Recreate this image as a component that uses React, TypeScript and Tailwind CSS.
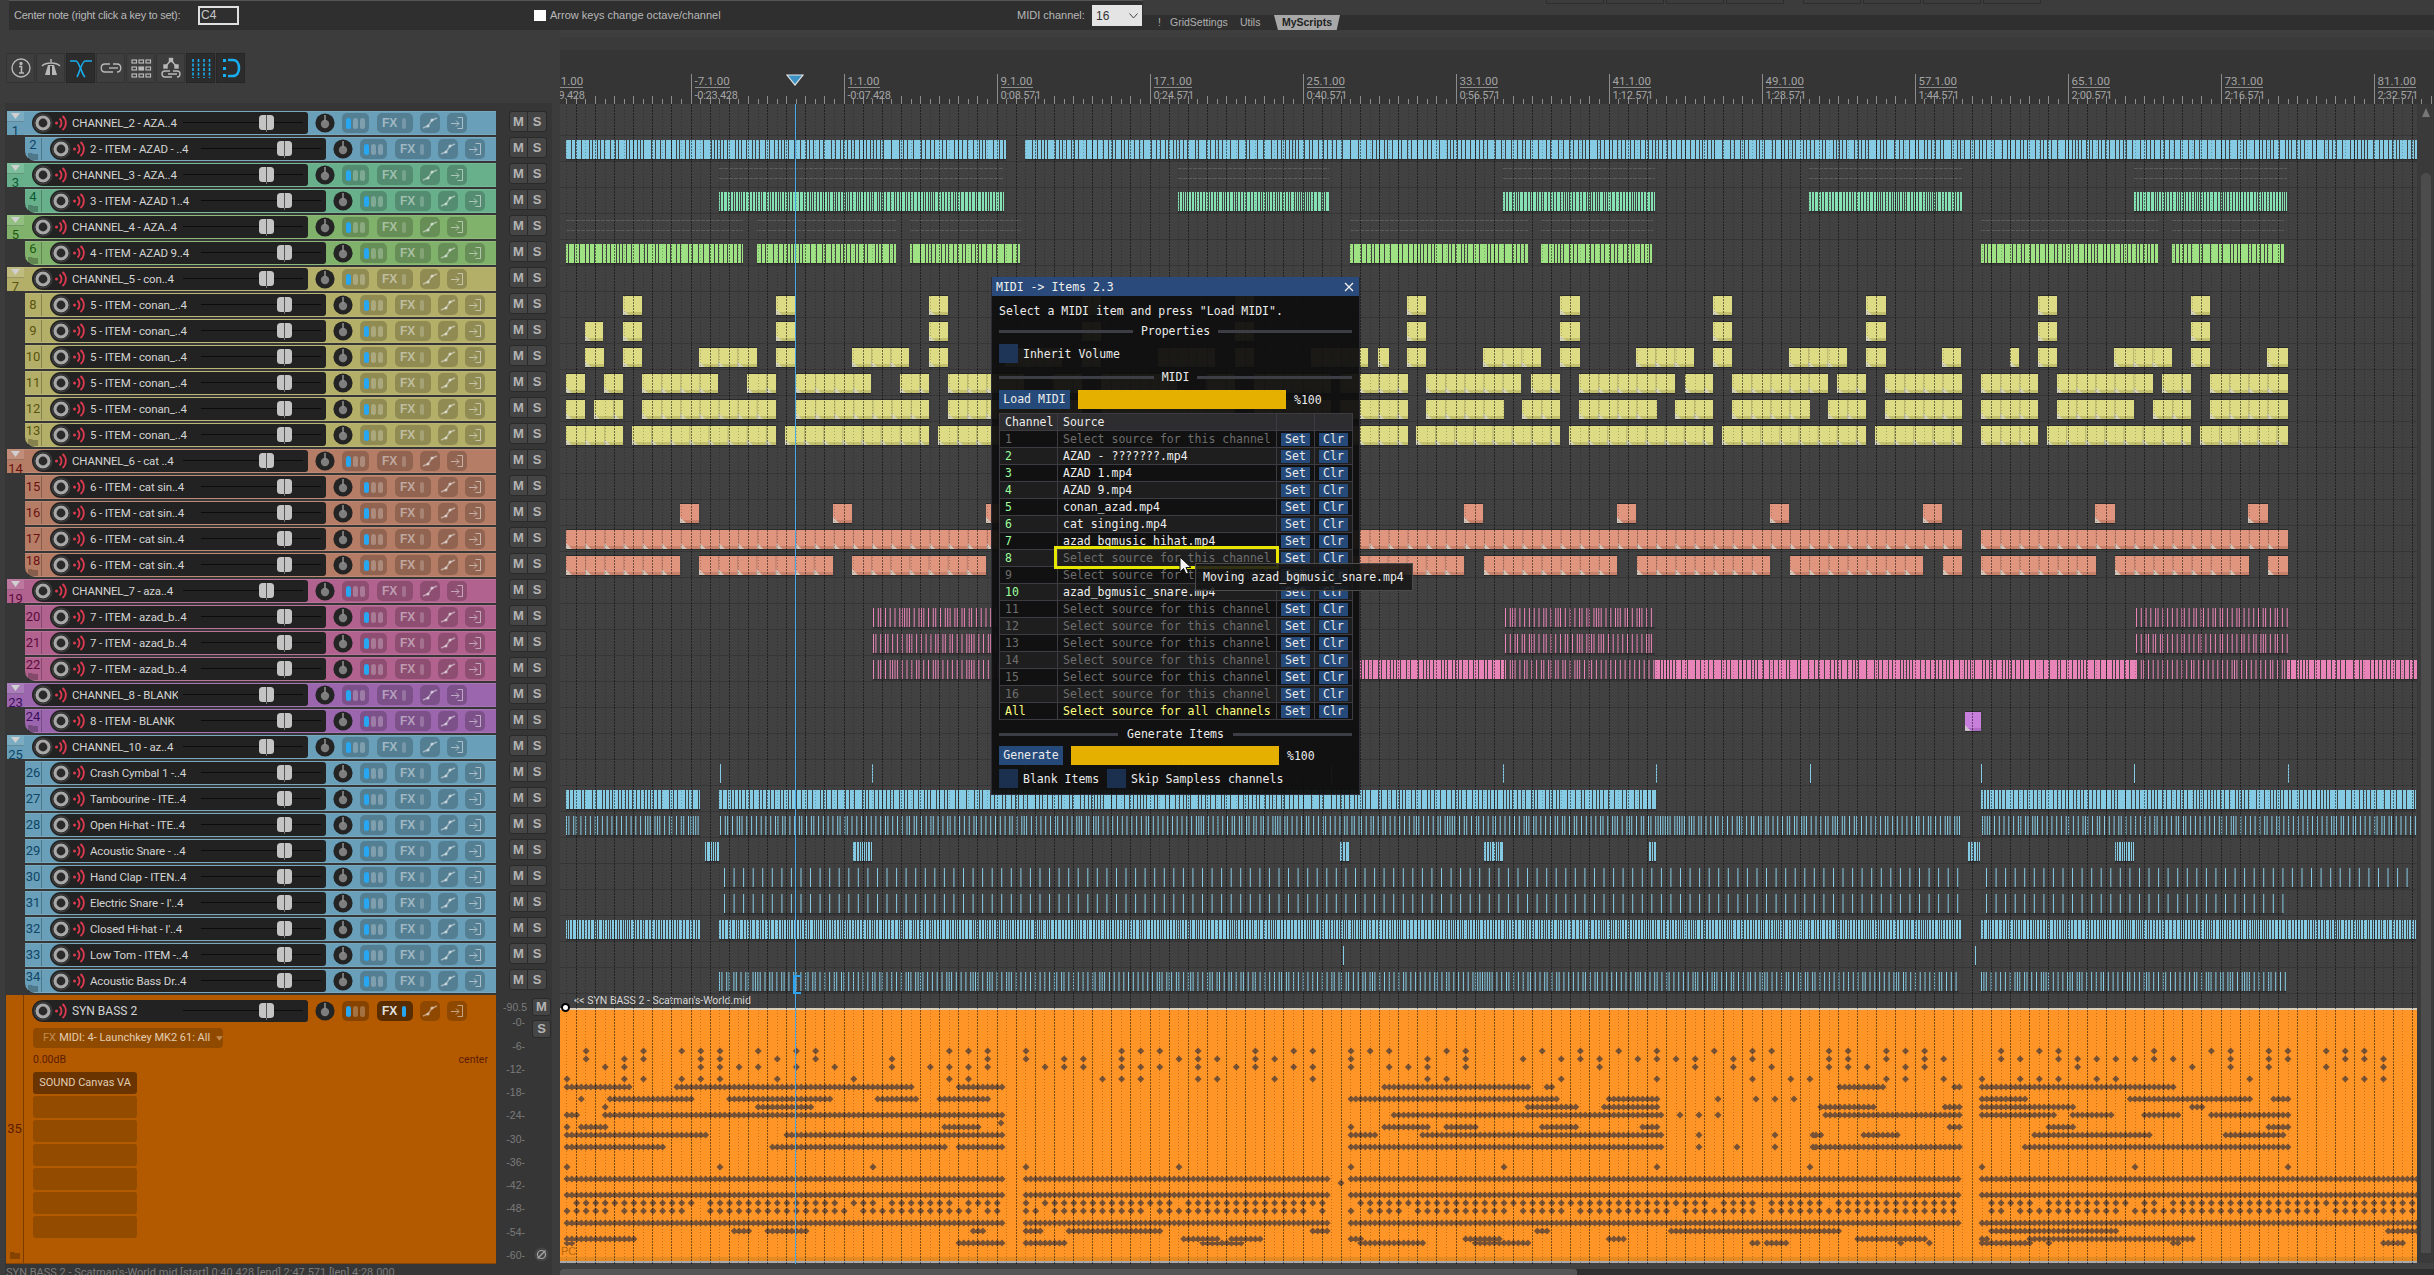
import React from "react";

type Range = [number, number];

function rng(seed: number) {
  let a = seed >>> 0;
  return () => {
    a = (a + 0x6d2b79f5) >>> 0;
    let t = a;
    t = Math.imul(t ^ (t >>> 15), t | 1);
    t ^= t + Math.imul(t ^ (t >>> 7), t | 61);
    return ((t ^ (t >>> 14)) >>> 0) / 4294967296;
  };
}

const OX = 560;
const AW = 1857;
const P = 19.125;

const GROUPS = {
  blue: { bg: "bg-[#699fb8]", num: "text-[#0f4566]", fold: "bg-[#7cacc2]", clip: "#86cbe4", low: "#6fb0ca" },
  teal: { bg: "bg-[#68b08c]", num: "text-[#0c5a34]", fold: "bg-[#7cbd9c]", clip: "#84e2b4", low: "#6cc29a" },
  green: { bg: "bg-[#80b26c]", num: "text-[#1d5a0c]", fold: "bg-[#93bf82]", clip: "#9ee284", low: "#84c26c" },
  yellow: { bg: "bg-[#b3ae68]", num: "text-[#5a5410]", fold: "bg-[#c0bb7e]", clip: "#dddb84", low: "#c2c06e" },
  salmon: { bg: "bg-[#b57d66]", num: "text-[#6a1212]", fold: "bg-[#c08e7a]", clip: "#e0957f", low: "#c8826c" },
  pink: { bg: "bg-[#b1628f]", num: "text-[#5c0c3c]", fold: "bg-[#bd78a0]", clip: "#e984b8", low: "#cc6c9e" },
  purple: { bg: "bg-[#9b66ad]", num: "text-[#3c0f5c]", fold: "bg-[#a97dba]", clip: "#c87fdc", low: "#b06cc4" },
};
type GroupKey = keyof typeof GROUPS;

type Row = { n: number; g: GroupKey; name: string; parent?: boolean; last?: boolean };
const ROWS: Row[] = [
  { n: 1, g: "blue", name: "CHANNEL_2 - AZA..4", parent: true },
  { n: 2, g: "blue", name: "2 - ITEM - AZAD - ..4", last: true },
  { n: 3, g: "teal", name: "CHANNEL_3 - AZA..4", parent: true },
  { n: 4, g: "teal", name: "3 - ITEM - AZAD 1..4", last: true },
  { n: 5, g: "green", name: "CHANNEL_4 - AZA..4", parent: true },
  { n: 6, g: "green", name: "4 - ITEM - AZAD 9..4", last: true },
  { n: 7, g: "yellow", name: "CHANNEL_5 - con..4", parent: true },
  { n: 8, g: "yellow", name: "5 - ITEM - conan_..4" },
  { n: 9, g: "yellow", name: "5 - ITEM - conan_..4" },
  { n: 10, g: "yellow", name: "5 - ITEM - conan_..4" },
  { n: 11, g: "yellow", name: "5 - ITEM - conan_..4" },
  { n: 12, g: "yellow", name: "5 - ITEM - conan_..4" },
  { n: 13, g: "yellow", name: "5 - ITEM - conan_..4", last: true },
  { n: 14, g: "salmon", name: "CHANNEL_6 - cat ..4", parent: true },
  { n: 15, g: "salmon", name: "6 - ITEM - cat sin..4" },
  { n: 16, g: "salmon", name: "6 - ITEM - cat sin..4" },
  { n: 17, g: "salmon", name: "6 - ITEM - cat sin..4" },
  { n: 18, g: "salmon", name: "6 - ITEM - cat sin..4", last: true },
  { n: 19, g: "pink", name: "CHANNEL_7 - aza..4", parent: true },
  { n: 20, g: "pink", name: "7 - ITEM - azad_b..4" },
  { n: 21, g: "pink", name: "7 - ITEM - azad_b..4" },
  { n: 22, g: "pink", name: "7 - ITEM - azad_b..4", last: true },
  { n: 23, g: "purple", name: "CHANNEL_8 - BLANK", parent: true },
  { n: 24, g: "purple", name: "8 - ITEM - BLANK", last: true },
  { n: 25, g: "blue", name: "CHANNEL_10 - az..4", parent: true },
  { n: 26, g: "blue", name: "Crash Cymbal 1 -..4" },
  { n: 27, g: "blue", name: "Tambourine - ITE..4" },
  { n: 28, g: "blue", name: "Open Hi-hat - ITE..4" },
  { n: 29, g: "blue", name: "Acoustic Snare - ..4" },
  { n: 30, g: "blue", name: "Hand Clap - ITEN..4" },
  { n: 31, g: "blue", name: "Electric Snare - I'..4" },
  { n: 32, g: "blue", name: "Closed Hi-hat - I'..4" },
  { n: 33, g: "blue", name: "Low Tom - ITEM -..4" },
  { n: 34, g: "blue", name: "Acoustic Bass Dr..4", last: true },
];

const Y8: Range[] = [[623, 642], [776, 795], [929, 948], [1082, 1101], [1235, 1254], [1407, 1426], [1560, 1580], [1713, 1732], [1866, 1886], [2038, 2057], [2191, 2210]];
const Y9: Range[] = [[585, 603], ...Y8];
const Y10: Range[] = [[585, 604], [623, 642], [699, 757], [776, 795], [852, 909], [929, 948], [1005, 1062], [1082, 1101], [1158, 1215], [1235, 1254], [1311, 1368], [1378, 1389], [1407, 1426], [1483, 1541], [1560, 1580], [1636, 1694], [1713, 1732], [1789, 1847], [1866, 1886], [1942, 1961], [2010, 2019], [2038, 2057], [2114, 2172], [2191, 2210], [2267, 2288]];
const Y11: Range[] = [[566, 585], [604, 623], [642, 718], [747, 776], [796, 871], [900, 929], [948, 1024], [1053, 1082], [1101, 1177], [1206, 1235], [1254, 1331], [1340, 1408], [1426, 1521], [1531, 1560], [1579, 1675], [1685, 1713], [1732, 1828], [1837, 1866], [1885, 1962], [1981, 2038], [2057, 2153], [2162, 2191], [2210, 2288]];
const Y12: Range[] = [[566, 585], [594, 623], [642, 776], [796, 929], [948, 1082], [1101, 1235], [1254, 1331], [1340, 1408], [1426, 1504], [1522, 1560], [1579, 1657], [1675, 1713], [1732, 1810], [1828, 1866], [1885, 1962], [1981, 2038], [2057, 2134], [2153, 2191], [2210, 2288]];
const Y13: Range[] = [[566, 623], [632, 776], [785, 929], [938, 1082], [1091, 1235], [1244, 1331], [1340, 1408], [1416, 1560], [1569, 1713], [1722, 1866], [1875, 1962], [1981, 2038], [2047, 2191], [2200, 2288]];
const S16: Range[] = [[680, 699], [833, 852], [986, 1005], [1139, 1158], [1292, 1311], [1464, 1483], [1617, 1636], [1770, 1789], [1923, 1942], [2095, 2115], [2248, 2268]];
const S17: Range[] = [[566, 1962], [1981, 2288]];
const S18: Range[] = [[566, 680], [699, 833], [852, 986], [1005, 1139], [1158, 1292], [1311, 1464], [1484, 1617], [1637, 1770], [1790, 1923], [1943, 1962], [1981, 2096], [2115, 2249], [2268, 2288]];

const CLIPS: Record<number, { g: GroupKey; r: Range[] }> = {
  8: { g: "yellow", r: Y8 }, 9: { g: "yellow", r: Y9 }, 10: { g: "yellow", r: Y10 }, 11: { g: "yellow", r: Y11 }, 12: { g: "yellow", r: Y12 }, 13: { g: "yellow", r: Y13 },
  16: { g: "salmon", r: S16 }, 17: { g: "salmon", r: S17 }, 18: { g: "salmon", r: S18 },
  24: { g: "purple", r: [[1965, 1981]] },
};

type Mode = "solid" | "dense" | "stick" | "even";
const BARS: Record<number, { g: GroupKey; r: Range[]; m: Mode }[]> = {
  2: [{ g: "blue", r: [[566, 1006], [1025, 2417]], m: "solid" }],
  4: [{ g: "teal", r: [[719, 1004], [1178, 1329], [1503, 1655], [1809, 1962], [2134, 2287]], m: "dense" }],
  6: [{ g: "green", r: [[566, 743], [757, 896], [910, 1021], [1350, 1528], [1541, 1653], [1981, 2158], [2172, 2284]], m: "solid" }],
  20: [{ g: "pink", r: [[873, 1000], [1505, 1655], [2136, 2287]], m: "stick" }],
  21: [{ g: "pink", r: [[873, 1000], [1505, 1655], [2136, 2287]], m: "stick" }],
  22: [
    { g: "pink", r: [[873, 1000], [1505, 1655], [2136, 2287]], m: "stick" },
    { g: "pink", r: [[1000, 1505], [1655, 2136], [2287, 2417]], m: "solid" },
  ],
  26: [{ g: "blue", r: [[720, 721], [872, 873], [1025, 1026], [1178, 1179], [1331, 1332], [1503, 1504], [1656, 1657], [1810, 1811], [1981, 1982], [2134, 2135], [2288, 2289]], m: "solid" }],
  27: [{ g: "blue", r: [[566, 700], [719, 1656], [1981, 2416]], m: "solid" }],
  28: [{ g: "blue", r: [[566, 700], [720, 1961], [1982, 2416]], m: "stick" }],
  29: [{ g: "blue", r: [[705, 720], [853, 872], [1340, 1350], [1484, 1503], [1649, 1656], [1968, 1980], [2115, 2134]], m: "dense" }],
  30: [{ g: "blue", r: [[724, 1959], [1986, 2409]], m: "even" }],
  31: [{ g: "blue", r: [[724, 1959], [1986, 2283]], m: "even" }],
  32: [{ g: "blue", r: [[566, 700], [719, 1962], [1981, 2416]], m: "dense" }],
  33: [{ g: "blue", r: [[1343, 1344], [1975, 1976]], m: "solid" }],
  34: [{ g: "blue", r: [[719, 1959], [1981, 2286]], m: "stick" }],
};

function barsPath(r: Range[], m: Mode, seed: number, h: number) {
  const rand = rng(seed);
  let d = "";
  const push = (x: number, w: number) => {
    d += `M${(x - OX).toFixed(1)} 0h${w}v${h}h${-w}z`;
  };
  for (const [a, b] of r) {
    if (b - a < 2) {
      push(a, 1);
      continue;
    }
    let x = a;
    while (x < b) {
      if (m === "solid") {
        const w = [2, 2, 3, 3, 4, 5, 7][Math.floor(rand() * 7)];
        const ww = Math.min(w, b - x);
        push(x, ww);
        x += ww + 1;
      } else if (m === "dense") {
        const w = [1, 1, 2, 2, 3][Math.floor(rand() * 5)];
        const ww = Math.min(w, b - x);
        push(x, ww);
        x += ww + 1;
      } else if (m === "stick") {
        push(x, 1);
        x += rand() < 0.3 ? 2.4 : 4.78;
      } else {
        push(x, 1);
        x += 9.56;
      }
    }
  }
  return d;
}

function Lane({ n }: { n: number }) {
  const clip = CLIPS[n];
  const bars = BARS[n];
  const thin = n === 3 ? BARS[4][0].r : n === 5 ? BARS[6][0].r : null;
  return (
    <div className="h-[26px] w-full">
      <svg width={AW} height={26} className="block">
        <line x1={0} x2={AW} y1={24.5} y2={24.5} stroke="#363636" />
        {thin &&
          thin.map(([a, b], i) => (
            <g key={i} stroke="#5c5c5c" strokeDasharray="4 1">
              <line x1={a - OX} x2={b - OX} y1={5.5} y2={5.5} />
              <line x1={a - OX} x2={b - OX} y1={15.5} y2={15.5} />
            </g>
          ))}
        {clip &&
          clip.r.map(([a, b], i) => {
            const x = a - OX;
            const w = b - a;
            const g = GROUPS[clip.g];
            const tris: number[] = [];
            for (let t = x; t < x + w - 4; t += P) tris.push(t);
            return (
              <g key={i}>
                <rect x={x} y={2} width={w} height={21} fill="#2b2b2b" />
                <rect x={x} y={3} width={w} height={16} fill={g.clip} />
                <rect x={x} y={19} width={w} height={3} fill={g.low} />
                {tris.map((t, k) => (
                  <g key={k}>
                    <path d={`M${t} 16L${t + 6} 22H${t}Z`} fill="#d8d8d0" fillOpacity={0.75} />
                    {k > 0 && <line x1={t + 0.5} x2={t + 0.5} y1={3} y2={22} stroke="#000" strokeOpacity={0.18} />}
                  </g>
                ))}
              </g>
            );
          })}
        {bars &&
          bars.map((b, i) => {
            const g = GROUPS[b.g];
            return (
              <g key={i}>
                {b.r.map(([a, c], k) => (
                  <rect key={k} x={a - OX} y={22} width={c - a} height={1.5} fill="#2e2e2e" />
                ))}
                <g transform="translate(0,3)">
                  <path d={barsPath(b.r, b.m, n * 97 + i, 19)} fill={g.clip} />
                </g>
              </g>
            );
          })}
      </svg>
    </div>
  );
}

function diamondsPath() {
  const rand = rng(4242);
  const ranges: Range[] = [[566, 1006], [1025, 1331], [1350, 1960], [1981, 2417]];
  const dense: Range[] = [[566, 1006], [1350, 1660], [1815, 1960], [1981, 2290]];
  let d = "";
  const add = (x: number, y: number) => {
    d += `M${(x - OX).toFixed(1)} ${y - 3.5}l3.5 3.5l-3.5 3.5l-3.5-3.5z`;
  };
  const run = (y: number, rs: Range[], step: number, p: number) => {
    for (const [a, b] of rs) {
      for (let x = a + 1; x < b; x += step) if (rand() < p) add(x, y - 1008);
    }
  };
  const cluster = (y: number, rs: Range[], on: number) => {
    for (const [a, b] of rs) {
      let s = rand() < 0.5;
      for (let x = a + 1; x < b; x += 4.78) {
        if (rand() < 0.12) s = rand() < on;
        if (s) add(x, y - 1008);
      }
    }
  };
  [1177, 1193, 1221].forEach((y) => run(y, ranges, 4.78, 1));
  [1201, 1209].forEach((y) => run(y, ranges, 9.56, 0.9));
  [1049, 1057, 1065, 1077].forEach((y) => run(y, ranges, 19.12, 0.45));
  run(1165, ranges, 153, 1);
  cluster(1085, dense, 0.6);
  cluster(1097, dense, 0.5);
  cluster(1105, dense, 0.5);
  cluster(1113, dense, 0.85);
  cluster(1125, dense, 0.35);
  cluster(1133, dense, 0.6);
  cluster(1145, dense, 0.9);
  run(1121, [[1000, 1010]], 19, 1);
  run(1145, [[1660, 1815]], 38, 0.7);
  run(1133, [[1660, 1815]], 38, 0.7);
  run(1113, [[1660, 1815]], 19, 0.4);
  run(1097, [[1660, 1815]], 19, 0.4);
  cluster(1229, ranges, 0.4);
  cluster(1237, ranges, 0.2);
  cluster(1241, ranges, 0.25);
  run(1181, [[1340, 1345]], 5, 1);
  return d;
}
const DIAMONDS = diamondsPath();

const BAR_LABELS: [string, string][] = [
  ["-15.1.00", "-0:39.428"], ["-7.1.00", "-0:23.428"], ["1.1.00", "-0:07.428"], ["9.1.00", "0:08.571"], ["17.1.00", "0:24.571"], ["25.1.00", "0:40.571"], ["33.1.00", "0:56.571"], ["41.1.00", "1:12.571"], ["49.1.00", "1:28.571"], ["57.1.00", "1:44.571"], ["65.1.00", "2:00.571"], ["73.1.00", "2:16.571"], ["81.1.00", "2:32.571"],
];

function GridOverlay() {
  const lines: React.ReactNode[] = [];
  let k = 0;
  for (let x = 843.6 - 153 * 2; x < 2417; x += 9.5625) {
    const px = Math.round(x - OX) + 0.5;
    if (px > 0) {
      const major = k % 2 === 0;
      lines.push(<line key={k} x1={px} x2={px} y1={0} y2={1160} stroke="#000" strokeOpacity={major ? 0.5 : 0.24} strokeDasharray={major ? "2 1" : "1 2"} />);
    }
    k++;
  }
  return (
    <svg width={AW} height={1160} className="absolute left-0 top-0 pointer-events-none">
      {lines}
    </svg>
  );
}

function RecSpk() {
  return (
    <svg width={40} height={22} viewBox="0 0 40 22" className="shrink-0">
      <circle cx={11} cy={11} r={6} fill="#2a2a2a" stroke="#a8a8a8" strokeWidth={3.2} />
      <circle cx={11} cy={11} r={8.8} fill="none" stroke="#3c3c3c" strokeWidth={1.5} />
      <circle cx={24.5} cy={11} r={1.5} fill="#dc3a50" />
      <path d="M27.5 6.5 A6 6 0 0 1 27.5 15.5" fill="none" stroke="#dc3a50" strokeWidth={1.8} />
      <path d="M30.5 4 A9 9 0 0 1 30.5 18" fill="none" stroke="#dc3a50" strokeWidth={1.8} />
    </svg>
  );
}

function Fader() {
  return (
    <svg width={120} height={22} viewBox="0 0 120 22" className="shrink-0 ml-[5px]">
      <line x1={0} x2={120} y1={10.5} y2={10.5} stroke="#0c0c0c" />
      <rect x={76} y={3} width={15} height={15} rx={3.5} fill="#c4c4c4" />
      <rect x={83} y={3} width={1} height={15} fill="#555" />
      <rect x={83} y={18} width={1} height={2} fill="#777" />
    </svg>
  );
}

function Knob() {
  return (
    <svg width={20} height={22} viewBox="0 0 20 22" className="shrink-0">
      <circle cx={10} cy={11} r={9.6} fill="#242424" />
      <circle cx={10} cy={12} r={4.2} fill="#7e7e7e" />
      <rect x={9.2} y={3} width={1.6} height={7} fill="#8a8a8a" />
    </svg>
  );
}

function Routing({ strong }: { strong?: boolean }) {
  return (
    <div className={`ml-[7px] w-[27px] h-[20px] rounded-[5px] flex items-center justify-center gap-[2px] ${strong ? "bg-black/25" : "bg-black/20"}`}>
      <div className="w-[5px] h-[11px] rounded-full bg-[#27a6f2]" />
      <div className="w-[5px] h-[11px] rounded-full bg-white/25" />
      <div className="w-[5px] h-[11px] rounded-full bg-white/25" />
    </div>
  );
}

function FxBtn({ on }: { on?: boolean }) {
  return (
    <div className={`ml-[8px] w-[36px] h-[20px] rounded-[5px] flex items-center pl-[5px] gap-[5px] ${on ? "bg-black/50" : "bg-black/20"}`}>
      <span className={`text-[12px] font-bold leading-none ${on ? "text-[#e0e0e0]" : "text-white/45"}`}>FX</span>
      <div className={`w-[4px] h-[11px] rounded-full ${on ? "bg-[#27a6f2]" : "bg-white/20"}`} />
    </div>
  );
}

function EnvBtn() {
  return (
    <div className="ml-[7px] w-[20px] h-[20px] rounded-[5px] bg-black/20 flex items-center justify-center">
      <svg width={16} height={14} viewBox="0 0 16 14">
        <path d="M1 12 L6 10 L10 4 L15 2" fill="none" stroke="#ffffff" strokeOpacity={0.45} strokeWidth={1.5} />
        <circle cx={6} cy={10} r={1.6} fill="#ffffff" fillOpacity={0.5} />
        <circle cx={10} cy={4} r={1.6} fill="#ffffff" fillOpacity={0.5} />
      </svg>
    </div>
  );
}

function IoBtn() {
  return (
    <div className="ml-[7px] w-[20px] h-[20px] rounded-[5px] bg-black/20 flex items-center justify-center">
      <svg width={14} height={14} viewBox="0 0 14 14" fill="none" stroke="#ffffff" strokeOpacity={0.5} strokeWidth={1}>
        <path d="M1 7.5H8.5M6 4.5L9 7.5L6 10.5" />
        <path d="M7.5 1.5H12.5V12.5H7.5" />
      </svg>
    </div>
  );
}

function Pill({ name }: { name: string }) {
  return (
    <div className="w-[276px] h-[22px] rounded-l-[11px] rounded-r-[3px] bg-[#222222] flex items-center shrink-0">
      <RecSpk />
      <div className="w-[106px] overflow-hidden whitespace-nowrap text-[11.5px] tracking-[-0.15px] text-[#d4d4d4] font-['Roboto',sans-serif] leading-[22px]">{name}</div>
      <Fader />
    </div>
  );
}

function MS({ cls = "ml-[13px]" }: { cls?: string }) {
  return (
    <div className={`${cls} flex h-[21px] font-['Liberation_Sans',sans-serif] text-[13px] font-bold text-[#b4b4b4]`}>
      <div className="w-[19px] bg-[#454545] border border-[#2a2a2a] rounded-l-[3px] flex items-center justify-center">M</div>
      <div className="w-[19px] bg-[#454545] border border-l-0 border-[#2a2a2a] rounded-r-[3px] flex items-center justify-center">S</div>
    </div>
  );
}

function TrackRow({ r }: { r: Row }) {
  const g = GROUPS[r.g];
  return (
    <div className="h-[26px] flex items-start shrink-0">
      {r.parent ? (
        <>
          <div className={`ml-[2px] w-[17px] h-[24px] flex flex-col overflow-hidden ${g.bg}`}>
            <div className={`h-[11px] flex items-center justify-center border-b border-black/20 ${g.fold}`}>
              <svg width={9} height={6} viewBox="0 0 9 6">
                <path d="M0 0H9L4.5 6Z" fill="#d0d0d0" />
              </svg>
            </div>
            <div className={`h-[13px] text-center text-[13px] leading-[18px] font-['Roboto',sans-serif] ${g.num}`}>{r.n}</div>
          </div>
          <div className={`w-[472px] h-[24px] pl-[8px] flex items-center border-y border-white/10 ${g.bg}`}>
            <Pill name={r.name} />
            <div className="ml-[7px]"><Knob /></div>
            <Routing />
            <FxBtn />
            <EnvBtn />
            <IoBtn />
          </div>
        </>
      ) : (
        <div className={`ml-[20px] w-[471px] h-[24px] flex items-center border-y border-white/10 ${g.bg} ${r.last ? "rounded-bl-[10px]" : ""}`}>
          <div className="w-[17px] h-full flex flex-col items-center border-r border-black/25 overflow-hidden font-['Roboto',sans-serif]">
            {r.last ? (
              <>
                <div className={`text-[13px] leading-[13px] ${g.num}`}>{r.n}</div>
                <svg width={10} height={8} viewBox="0 0 10 8" className="mt-[1px]">
                  <path d="M0 1H4L5 2H10V8H0Z" fill="#000" fillOpacity={0.25} />
                </svg>
              </>
            ) : (
              <div className={`text-[13px] leading-[22px] ${g.num}`}>{r.n}</div>
            )}
          </div>
          <div className="ml-[8px]"><Pill name={r.name} /></div>
          <div className="ml-[7px]"><Knob /></div>
          <Routing />
          <FxBtn />
          <EnvBtn />
          <IoBtn />
        </div>
      )}
      <MS />
    </div>
  );
}

function ToolIcon({ i }: { i: number }) {
  const g = "#b8b8b8";
  const b = "#18aef0";
  const base = { width: 24, height: 24, viewBox: "0 0 24 24", fill: "none" };
  switch (i) {
    case 0:
      return (
        <svg {...base} stroke={g} strokeWidth={1.4}>
          <circle cx={12} cy={12} r={9} />
          <circle cx={12} cy={7.5} r={1} fill={g} />
          <path d="M10 10.5H12.5V16.5M10 17H15" strokeWidth={1.6} />
        </svg>
      );
    case 1:
      return (
        <svg {...base} stroke={g} strokeWidth={1.5}>
          <path d="M3 10C7 6 17 6 21 10" />
          <path d="M12 3V6" />
          <path d="M9 9H15L18 19H6Z" fill={g} stroke="none" />
          <path d="M12 10V19" stroke="#3a3a3a" strokeWidth={2} />
        </svg>
      );
    case 2:
      return (
        <svg {...base} stroke={b} strokeWidth={1.6}>
          <path d="M1 5H7C10 5 13 19 16 21" />
          <path d="M23 5H16C13 5 10 18 8 21" />
        </svg>
      );
    case 3:
      return (
        <svg {...base} stroke={g} strokeWidth={1.4}>
          <path d="M11 8H6C1 8 1 16 6 16H14" />
          <path d="M10 12H19" />
          <path d="M14 8H18C23 8 23 16 18 16" />
        </svg>
      );
    case 4:
      return (
        <svg {...base} stroke={g} strokeWidth={1.2}>
          {[3, 10, 17].map((x) =>
            [4, 11, 18].map((y) => <rect key={`${x}${y}`} x={x} y={y} width={4.5} height={3} fill={x === 10 && y === 11 ? g : "none"} />)
          )}
        </svg>
      );
    case 5:
      return (
        <svg {...base} stroke={g} strokeWidth={1.4}>
          <path d="M7 10L12 4L17 10" />
          <rect x={10.5} y={2.5} width={3} height={3} fill={g} />
          <rect x={5} y={9} width={3} height={3} fill={g} />
          <rect x={16} y={9} width={3} height={3} fill={g} />
          <path d="M11 15H6C2 15 2 21 6 21H13M9 18H18M14 15H18C22 15 22 21 18 21" />
        </svg>
      );
    case 6:
      return (
        <svg {...base} stroke={b} strokeWidth={1.6} strokeDasharray="3 1.5">
          <path d="M4 3V22M9.5 3V22M15 3V22M20.5 3V22" />
        </svg>
      );
    default:
      return (
        <svg {...base} stroke={b} strokeWidth={2.6}>
          <path d="M9 4H14C22 4 22 20 14 20H9" />
          <rect x={4} y={3} width={3} height={3} fill={b} stroke="none" />
          <rect x={4} y={11} width={3} height={3} fill={b} stroke="none" />
          <rect x={4} y={18} width={3} height={3} fill={b} stroke="none" />
        </svg>
      );
  }
}

const TABLE: { c: string; s?: string }[] = [
  { c: "1" }, { c: "2", s: "AZAD - ???????.mp4" }, { c: "3", s: "AZAD 1.mp4" }, { c: "4", s: "AZAD 9.mp4" }, { c: "5", s: "conan_azad.mp4" }, { c: "6", s: "cat singing.mp4" }, { c: "7", s: "azad_bgmusic_hihat.mp4" }, { c: "8" }, { c: "9" }, { c: "10", s: "azad_bgmusic_snare.mp4" }, { c: "11" }, { c: "12" }, { c: "13" }, { c: "14" }, { c: "15" }, { c: "16" },
];

function Sep({ t, a, b }: { t: string; a: number; b: number }) {
  return (
    <div className="flex items-center h-[14px]">
      <div className="h-[3px] bg-[#3d3d45]" style={{ width: a }} />
      <div className="flex-1 text-center whitespace-nowrap">{t}</div>
      <div className="h-[3px] bg-[#3d3d45]" style={{ width: b }} />
    </div>
  );
}

function SmallBtn({ t }: { t: string }) {
  return <div className="w-[29px] h-[13px] bg-[#254a7a] text-center leading-[13px] text-[#e8e8e8]">{t}</div>;
}

function TableRow({ c, s, i, all }: { c: string; s?: string; i: number; all?: boolean }) {
  const numCls = all ? "text-[#ffff80]" : s || c === "8" ? "text-[#9fff9f]" : "text-[#6e6e6e]";
  const srcCls = all ? "text-[#ffff80]" : s ? "text-[#efefef]" : "text-[#6e6e6e]";
  return (
    <div className={`flex h-[17px] border-b border-[#3c3c42] ${i % 2 ? "bg-[#1e1e1e]" : "bg-[#111111]"}`}>
      <div className={`w-[58px] pl-[5px] border-r border-[#3c3c42] leading-[16px] ${numCls}`}>{c}</div>
      <div className={`w-[219px] pl-[5px] border-r border-[#3c3c42] leading-[16px] whitespace-nowrap overflow-hidden ${srcCls}`}>
        {all ? "Select source for all channels" : s || "Select source for this channel"}
      </div>
      <div className="w-[38px] border-r border-[#3c3c42] flex items-center justify-center"><SmallBtn t="Set" /></div>
      <div className="flex-1 flex items-center justify-center"><SmallBtn t="Clr" /></div>
    </div>
  );
}

function Dialog() {
  return (
    <div className="absolute left-[991px] top-[277px] w-[369px] h-[518px] bg-[#0f0f0ff2] text-[#ececec] font-['DejaVu_Sans_Mono',monospace] text-[11.5px] leading-[14px] border border-[#2c2c34] border-t-0">
      <div className="h-[19px] bg-[#294a7a] flex items-center justify-between pl-[4px] pr-[5px] text-[#f0f0f0]">
        <span>MIDI -&gt; Items 2.3</span>
        <svg width={10} height={10} viewBox="0 0 10 10" stroke="#f0f0f0" strokeWidth={1.3}>
          <path d="M1 1L9 9M9 1L1 9" />
        </svg>
      </div>
      <div className="px-[7px] pt-[8px]">
        <div className="h-[14px] whitespace-nowrap">Select a MIDI item and press "Load MIDI".</div>
        <div className="mt-[6px]"><Sep t="Properties" a={134} b={134} /></div>
        <div className="mt-[6px] flex items-center h-[19px]">
          <div className="w-[19px] h-[19px] bg-[#1e3558]" />
          <span className="ml-[5px]">Inherit Volume</span>
        </div>
        <div className="mt-[7px]"><Sep t="MIDI" a={155} b={155} /></div>
        <div className="mt-[6px] flex items-center h-[19px]">
          <div className="w-[71px] h-[19px] bg-[#254a7a] text-center leading-[19px] whitespace-nowrap">Load MIDI</div>
          <div className="ml-[8px] w-[208px] h-[19px] bg-[#e6b000]" />
          <span className="ml-[8px]">%100</span>
        </div>
        <div className="mt-[4px] w-[354px] border border-[#3c3c42] border-b-0">
          <div className="flex h-[17px] bg-[#2d2d30] border-b border-[#3c3c42]">
            <div className="w-[58px] pl-[5px] border-r border-[#3c3c42] leading-[16px]">Channel</div>
            <div className="w-[219px] pl-[5px] border-r border-[#3c3c42] leading-[16px]">Source</div>
            <div className="w-[38px] border-r border-[#3c3c42]" />
            <div className="flex-1" />
          </div>
          {TABLE.map((t, i) => (
            <TableRow key={t.c} c={t.c} s={t.s} i={i} />
          ))}
          <TableRow c="All" i={16} all />
        </div>
        <div className="mt-[7px]"><Sep t="Generate Items" a={119} b={119} /></div>
        <div className="mt-[5px] flex items-center h-[19px]">
          <div className="w-[64px] h-[19px] bg-[#254a7a] text-center leading-[19px]">Generate</div>
          <div className="ml-[8px] w-[208px] h-[19px] bg-[#e6b000]" />
          <span className="ml-[8px]">%100</span>
        </div>
        <div className="mt-[4px] flex items-center h-[19px] whitespace-nowrap">
          <div className="w-[19px] h-[19px] bg-[#1b2f4e]" />
          <span className="ml-[5px] w-[84px]">Blank Items</span>
          <div className="w-[19px] h-[19px] bg-[#1b2f4e]" />
          <span className="ml-[5px]">Skip Sampless channels</span>
        </div>
      </div>
    </div>
  );
}

export default function App() {
  return (
    <div className="relative w-[2434px] h-[1275px] overflow-hidden bg-[#3c3c3c] font-['Liberation_Sans',sans-serif]">
      {/* Top bar */}
      <div className="h-[30px] flex">
        <div className="ml-[9px] w-[1134px] h-[30px] bg-[#2f2f2f] border-t border-[#555] flex items-center text-[11px] text-[#b8b8b8] whitespace-nowrap">
          <span className="ml-[5px] w-[184px] tracking-[-0.25px]">Center note (right click a key to set):</span>
          <div className="w-[41px] h-[19px] border-2 border-[#e0e0e0] text-[#c8c8c8] text-[12px] leading-[15px] pl-[1px]">C4</div>
          <div className="ml-[295px] w-[12px] h-[11px] bg-white" />
          <span className="ml-[4px] w-[467px]">Arrow keys change octave/channel</span>
          <span className="w-[75px]">MIDI channel:</span>
          <div className="w-[50px] h-[21px] bg-[#e4e4e4] flex items-center justify-between px-[4px] text-[#333] text-[12px]">
            16
            <svg width={9} height={6} viewBox="0 0 9 6" fill="none" stroke="#444">
              <path d="M0.5 0.5L4.5 5L8.5 0.5" />
            </svg>
          </div>
        </div>
        <div className="flex-1 flex flex-col">
          <div className="h-[15px] flex items-start pl-[403px] gap-[2px]">
            {[1546, 1606, 1667, 1727].map((k) => (
              <div key={k} className="w-[58px] h-[4px] border border-t-0 border-[#2e2e2e]" />
            ))}
            <div className="w-[15px]" />
            {[1802, 1862, 1922, 1982].map((k) => (
              <div key={k} className="w-[58px] h-[4px] border border-t-0 border-[#2e2e2e]" />
            ))}
          </div>
          <div className="h-[15px] bg-[#2f2f2f] flex items-center text-[10.5px] text-[#b0b0b0] pl-[15px] whitespace-nowrap">
            <span className="w-[12px]">!</span>
            <span className="w-[70px]">GridSettings</span>
            <span className="w-[34px]">Utils</span>
            <span className="h-[15px] w-[66px] bg-[#a8a8a8] text-[#222] font-bold text-center leading-[15px] [clip-path:polygon(0_0,100%_0,95%_100%,6%_100%)]">MyScripts</span>
          </div>
        </div>
      </div>

      <div className="flex h-[1245px]">
        {/* Left */}
        <div className="w-[560px] shrink-0 flex flex-col">
          <div className="h-[73px] shrink-0 pt-[23px] pl-[6px] flex gap-px">
            {[0, 1, 2, 3, 4, 5, 6, 7].map((i) => (
              <div key={i} className={`w-[29px] h-[30px] flex items-center justify-center border ${i === 2 || i === 6 || i === 7 ? "bg-[#2c2c2c] border-[#262626]" : "bg-[#3e3e3e] border-[#333]"}`}>
                <ToolIcon i={i} />
              </div>
            ))}
          </div>
          <div className="ml-[5px] w-[547px] flex-1 min-h-0 overflow-hidden bg-[#363636] pt-[8px] flex flex-col">
            {ROWS.map((r) => (
              <TrackRow key={r.n} r={r} />
            ))}
            {/* Track 35 */}
            <div className="flex h-[269px] shrink-0">
              <div className="ml-[1px] w-[490px] h-[269px] bg-[#b35a00] flex border-b border-[#8a4600]">
                <div className="relative w-[18px] border-r border-[#7a3c00] flex items-center justify-center text-[13px] text-[#5c1c00] font-['Roboto',sans-serif]">
                  35
                  <svg width={10} height={8} viewBox="0 0 10 8" className="absolute left-[4px] bottom-[4px]">
                    <path d="M0 1H4L5 2H10V8H0Z" fill="#000" fillOpacity={0.25} />
                  </svg>
                </div>
                <div className="flex-1 pl-[8px] pt-[5px] flex flex-col">
                  <div className="flex items-center h-[22px]">
                    <div className="w-[276px] h-[22px] rounded-l-[11px] rounded-r-[3px] bg-[#222222] flex items-center shrink-0">
                      <RecSpk />
                      <div className="w-[106px] overflow-hidden whitespace-nowrap text-[12px] text-[#d4d4d4] font-['Roboto',sans-serif] leading-[22px]">SYN BASS 2</div>
                      <Fader />
                    </div>
                    <div className="ml-[7px]"><Knob /></div>
                    <Routing strong />
                    <FxBtn on />
                    <EnvBtn />
                    <IoBtn />
                  </div>
                  <div className="mt-[6px] ml-px w-[190px] h-[20px] rounded-[4px] bg-[#8f4a00] flex items-center pl-[10px] text-[11px] whitespace-nowrap font-['Roboto',sans-serif]">
                    <span className="text-[#c08a50] w-[19px]">FX</span>
                    <span className="text-[#e4cdb0]">MIDI: 4- Launchkey MK2 61: All</span>
                    <svg width={8} height={5} viewBox="0 0 8 5" className="ml-[6px]">
                      <path d="M0 0H8L4 5Z" fill="#c08a50" />
                    </svg>
                  </div>
                  <div className="mt-[6px] ml-px mr-[8px] flex justify-between text-[10.5px] leading-[12px] text-[#5c1c00] font-['Roboto',sans-serif]">
                    <span>0.00dB</span>
                    <span>center</span>
                  </div>
                  <div className="mt-[6px] ml-px w-[104px] flex flex-col gap-[2px]">
                    <div className="h-[22px] rounded-[3px] bg-[#6a3400] text-[#e0cdb4] text-[11px] text-center leading-[22px] whitespace-nowrap font-['Roboto',sans-serif]">SOUND Canvas VA</div>
                    {[0, 1, 2, 3, 4, 5].map((k) => (
                      <div key={k} className="h-[22px] rounded-[3px] bg-[#934b00]" />
                    ))}
                  </div>
                </div>
              </div>
              <div className="w-[56px] flex">
                <div className="w-[31px] pt-[6px] pb-[3px] flex flex-col justify-between items-end text-[10.5px] leading-[12px] text-[#7c7c7c]">
                  <span className="-mb-[8px]">-90.5</span>
                  <span className="pr-[2px]">-0-</span>
                  {["-6-", "-12-", "-18-", "-24-", "-30-", "-36-", "-42-", "-48-", "-54-", "-60-"].map((t) => (
                    <span key={t} className="pr-[2px]">{t}</span>
                  ))}
                </div>
                <div className="w-[25px] pl-[5px] pt-[3px] flex flex-col">
                  <div className="h-[18px] w-[19px] bg-[#454545] border border-[#2a2a2a] rounded-[3px] text-[13px] font-bold text-[#b4b4b4] flex items-center justify-center">M</div>
                  <div className="mt-[4px] h-[18px] w-[19px] bg-[#454545] border border-[#2a2a2a] rounded-[3px] text-[13px] font-bold text-[#b4b4b4] flex items-center justify-center">S</div>
                  <svg width={15} height={15} viewBox="0 0 15 15" className="mt-[209px] ml-[2px]" fill="none" stroke="#a8a8a8" strokeWidth={1.2}>
                    <circle cx={7.5} cy={7.5} r={7} fill="#444" stroke="none" />
                    <circle cx={7.5} cy={7.5} r={4} />
                    <path d="M3.5 11.5L11.5 3.5" />
                  </svg>
                </div>
              </div>
            </div>
            <div className="pl-[1px] pt-[2px] shrink-0 text-[11px] leading-[14px] text-[#7c7c7c] whitespace-nowrap font-['Roboto',sans-serif]">SYN BASS 2 - Scatman's-World.mid [start] 0:40.428 [end] 2:47.571 [len] 4:28.000</div>
          </div>
        </div>

        {/* Arrange */}
        <div className="flex-1 flex flex-col overflow-hidden bg-[#414141]">
          <div className="relative w-full h-[74px] shrink-0 overflow-hidden bg-[#353535]">
            <div className="h-[7px] bg-[#3e3e3e]" />
            <div className="h-[13px] bg-[#3a3a3a]" />
            <svg width={1874} height={74} className="absolute left-0 top-0">
              {Array.from({ length: 200 }).map((_, i) => {
                const x = Math.round(843.6 - 306 + i * 9.5625 - OX);
                const big = i % 2 === 0;
                return <line key={i} x1={x + 0.5} x2={x + 0.5} y1={big ? 66 : 69} y2={74} stroke="#8c8c8c" />;
              })}
            </svg>
            {BAR_LABELS.map(([a, b], i) => {
              const x = 537.6 + i * 153 - OX;
              return (
                <div key={a} className="absolute top-[44px] h-[30px] border-l border-[#8c8c8c] pl-[3px] text-[11.5px] text-[#a4a4a4] font-['Roboto',sans-serif] whitespace-nowrap" style={{ left: x }}>
                  <div className="w-fit h-[14px] leading-[14px] border-b border-[#8c8c8c]">{a}</div>
                  <div className="text-[11px] leading-[13px] mt-px tracking-[-0.3px]">{b}</div>
                </div>
              );
            })}
            <svg width={18} height={12} viewBox="0 0 18 12" className="absolute left-[226px] top-[44px]">
              <path d="M1 1H17L9 11Z" fill="#3f93c4" stroke="#e6e6e6" strokeWidth={1.2} />
            </svg>
          </div>
          <div className="relative flex-1 overflow-hidden">
            <div className="flex">
              <div className="relative w-[1857px] shrink-0">
                <div className="pt-[7px] flex flex-col">
                  {Array.from({ length: 34 }).map((_, i) => (
                    <Lane key={i} n={i + 1} />
                  ))}
                  <div className="h-[13px] pl-[14px] text-[10.5px] leading-[12px] text-[#d8d8d8] whitespace-nowrap font-['Roboto',sans-serif]">&lt;&lt; SYN BASS 2 - Scatman's-World.mid</div>
                  <div className="relative h-[255px] bg-[#ff9526] border-t-2 border-[#d9cdbc] border-b-2 border-b-[#aaaaaa]">
                    <svg width={AW} height={251} className="block">
                      <rect x={0} y={247} width={AW} height={4} fill="#e68a24" />
                      <path d={DIAMONDS} fill="#775235" />
                    </svg>
                    <span className="absolute left-[1px] bottom-[4px] text-[11px] leading-[12px] text-[#b86a10]">PC</span>
                  </div>
                </div>
                <GridOverlay />
                <div className="absolute left-[235px] top-0 w-px h-[1160px] bg-[#4aa8e4]" />
                <div className="absolute left-[1px] top-[899px] w-[9px] h-[9px] rounded-full bg-white border-2 border-black" />
                <div className="absolute left-[233px] top-[871px] w-[8px] h-[19px] border-2 border-r-0 border-[#2fa4ee]" />
              </div>
              <div className="w-[17px] shrink-0 bg-[#3a3a3a] flex flex-col items-center pt-[4px]">
                <svg width={8} height={9} viewBox="0 0 8 9">
                  <path d="M4 0L8 9H0Z" fill="#777" />
                </svg>
                <div className="mt-[56px] w-[10px] h-[1080px] rounded-t-[5px] bg-[#4c4c4c]" />
              </div>
            </div>
            <div className="absolute left-0 bottom-0 w-full h-[6px] bg-[#2f2f2f]">
              <div className="w-[1017px] h-[6px] rounded-t-[3px] bg-[#565656]" />
            </div>
          </div>
        </div>
      </div>

      {/* Overlays */}
      <Dialog />
      <div className="absolute left-[1054px] top-[546px] w-[225px] h-[23px] border-[3px] border-[#e6e600]" />
      <div className="absolute left-[1195px] top-[563px] w-[218px] h-[28px] bg-[#161616dd] border border-[#4c4c4c] text-[#ececec] font-['DejaVu_Sans_Mono',monospace] text-[11.5px] leading-[26px] pl-[7px] whitespace-nowrap">
        Moving azad_bgmusic_snare.mp4
      </div>
      <svg width={14} height={20} viewBox="0 0 14 20" className="absolute left-[1179px] top-[556px]">
        <path d="M1 1V16L4.5 12.5L7 18L9.5 17L7 11.5H12Z" fill="#f4f4f4" stroke="#111" strokeWidth={1} />
      </svg>
    </div>
  );
}
